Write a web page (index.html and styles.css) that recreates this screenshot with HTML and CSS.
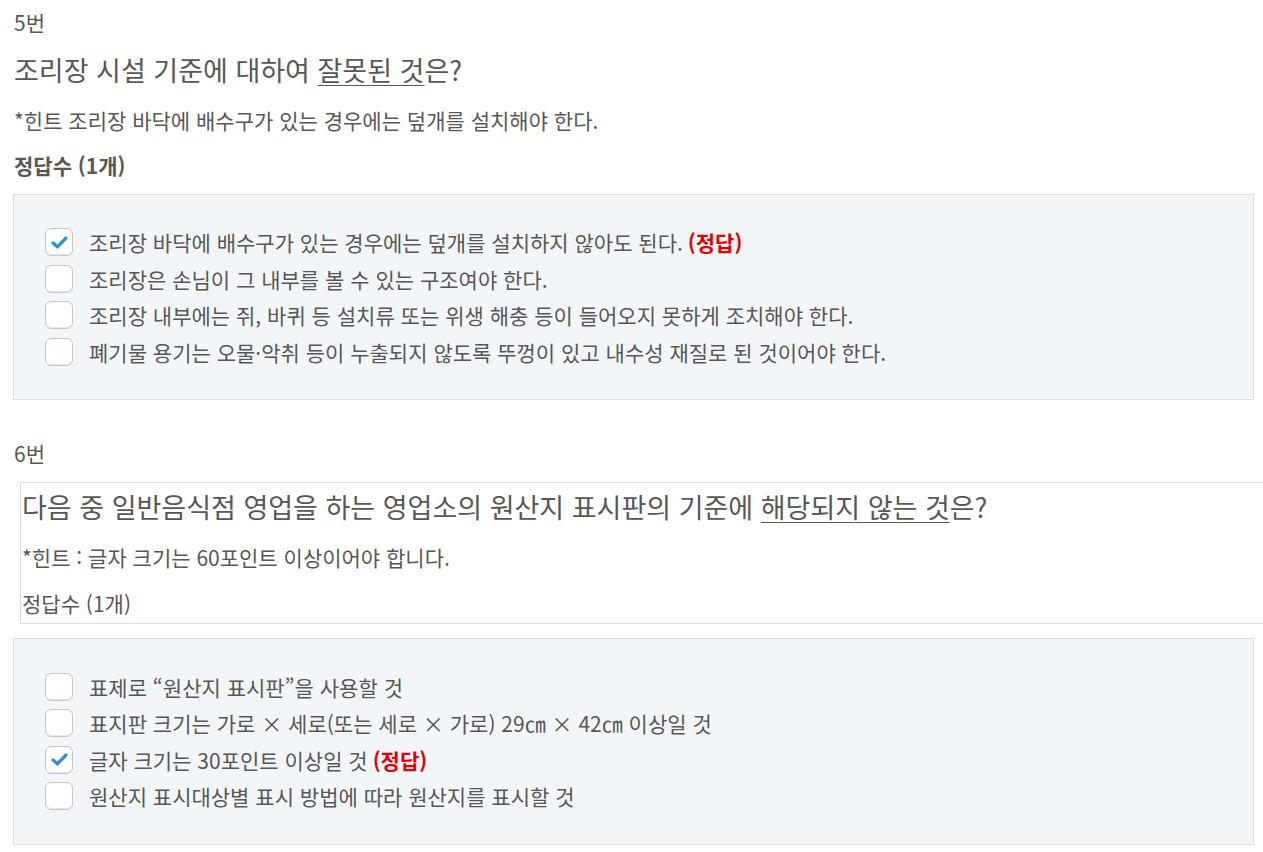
FILE: index.html
```html
<!DOCTYPE html>
<html lang="ko">
<head>
<meta charset="utf-8">
<link rel="stylesheet" href="styles.css">
</head>
<body>
<section class="q">
  <div class="num">5번</div>
  <div class="head">
    <h2 class="title">조리장 시설 기준에 대하여 <u>잘못된 것</u>은?</h2>
    <p class="hint">*힌트 조리장 바닥에 배수구가 있는 경우에는 덮개를 설치해야 한다.</p>
    <p class="count bold">정답수 (1개)</p>
  </div>
  <ul class="opts">
    <li><span class="cb on"><svg viewBox="0 0 16 16"><path d="M2.6 8.4l3.6 3.3 7.2-7.4"/></svg></span>조리장 바닥에 배수구가 있는 경우에는 덮개를 설치하지 않아도 된다. <b class="ans">(정답)</b></li>
    <li><span class="cb"></span>조리장은 손님이 그 내부를 볼 수 있는 구조여야 한다.</li>
    <li><span class="cb"></span>조리장 내부에는 쥐, 바퀴 등 설치류 또는 위생 해충 등이 들어오지 못하게 조치해야 한다.</li>
    <li><span class="cb"></span>폐기물 용기는 오물·악취 등이 누출되지 않도록 뚜껑이 있고 내수성 재질로 된 것이어야 한다.</li>
  </ul>
</section>
<section class="q q2">
  <div class="num">6번</div>
  <div class="head boxed">
    <h2 class="title">다음 중 일반음식점 영업을 하는 영업소의 원산지 표시판의 기준에 <u>해당되지 않는 것</u>은?</h2>
    <p class="hint">*힌트 : 글자 크기는 60포인트 이상이어야 합니다.</p>
    <p class="count">정답수 (1개)</p>
  </div>
  <ul class="opts">
    <li><span class="cb"></span>표제로 “원산지 표시판”을 사용할 것</li>
    <li><span class="cb"></span>표지판 크기는 가로 × 세로(또는 세로 × 가로) 29㎝ × 42㎝ 이상일 것</li>
    <li><span class="cb on"><svg viewBox="0 0 16 16"><path d="M2.6 8.4l3.6 3.3 7.2-7.4"/></svg></span>글자 크기는 30포인트 이상일 것 <b class="ans">(정답)</b></li>
    <li><span class="cb"></span>원산지 표시대상별 표시 방법에 따라 원산지를 표시할 것</li>
  </ul>
</section>
</body>
</html>
```
FILE: styles.css
```css
* { box-sizing: border-box; }
body {
  margin: 0;
  padding: 0 10px 0 13px;
  font-family: "Noto Sans CJK KR", "Noto Sans", sans-serif;
  color: #575757;
  background: #fff;
}
.q { display: flex; flex-direction: column; }
.q2 { margin-top: 38px; }
.num {
  font-size: 21px;
  line-height: 30px;
  padding: 7px 0 0 1px;
}
.q2 .num { padding-top: 0; }
.head { padding-left: 1px; }
.title {
  margin: 15px 0 0;
  font-size: 27px;
  font-weight: 400;
  line-height: 36px;
  color: #575757;
}
.title u { text-decoration-thickness: 1px; text-underline-offset: 4px; }
.hint {
  margin: 17px 0 0;
  font-size: 21px;
  line-height: 30px;
}
.count {
  margin: 15px 0 0;
  font-size: 21px;
  line-height: 30px;
}
.count.bold { font-weight: 700; }
.head.boxed {
  margin: 14px -10px 0 7px;
  border: 1px solid #ddd;
  border-right: none;
  padding: 6px 0 5px 1px;
}
.head.boxed .title { margin-top: 0; }
.head.boxed .count { margin-top: 16px; }
.opts {
  list-style: none;
  margin: 14px 0 0;
  padding: 32px 30px 32px 31px;
  width: 1241px;
  background: #f3f6f9;
  border: 1px solid #ddd;
  display: flex;
  flex-direction: column;
  gap: 6.5px;
}
.q2 .opts { padding-top: 33px; padding-bottom: 33px; }
.opts li {
  display: flex;
  align-items: center;
  font-size: 21px;
  line-height: 30px;
  color: #575757;
}
.cb {
  width: 28px;
  height: 28px;
  border: 1px solid #c6c6c6;
  border-radius: 6px;
  background: #fff;
  box-shadow: inset 0 -1px 1px #e4e4e4;
  margin-right: 16px;
  flex: none;
  display: flex;
  align-items: center;
  justify-content: center;
}
.cb svg { width: 19px; height: 19px; fill: none; stroke: #2b8fdd; stroke-width: 2.8; stroke-linecap: round; stroke-linejoin: round; }
.ans { color: #e50000; font-weight: 700; margin-left: 5px; white-space: pre; }
```
